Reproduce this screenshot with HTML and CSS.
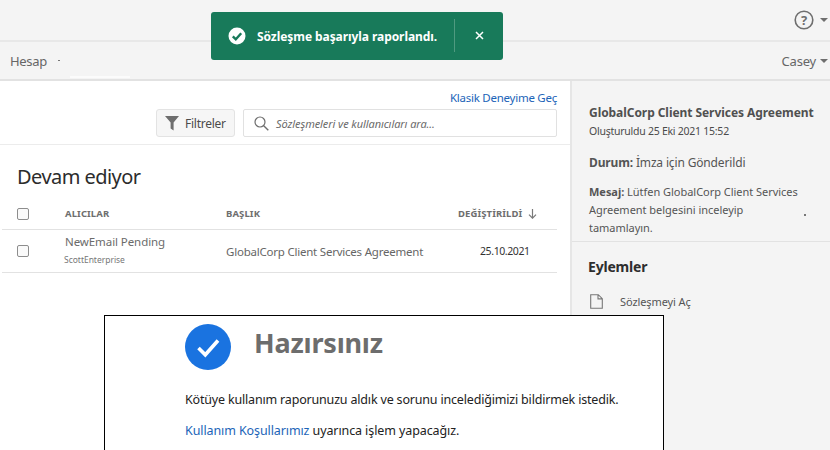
FILE: index.html
```html
<!DOCTYPE html>
<html lang="tr">
<head>
<meta charset="utf-8">
<title>Devam ediyor</title>
<link rel="stylesheet" href="styles.css">
</head>
<body>
<div class="page">
  <header class="topbar">
    <svg class="help" width="20" height="20" viewBox="0 0 20 20"><circle cx="10" cy="10" r="8.8" fill="none" stroke="#6e6e6e" stroke-width="1.6"/><text x="10" y="14.5" text-anchor="middle" class="help-q">?</text></svg>
    <span class="caret caret-help"></span>
  </header>
  <nav class="navbar">
    <span class="nav-item">Hesap</span>
    <span class="nav-active"></span>
    <span class="speck speck-nav"></span>
    <span class="user">Casey<span class="caret"></span></span>
  </nav>
  <div class="content">
    <main class="main">
      <div class="classic"><a href="#">Klasik Deneyime Geç</a></div>
      <div class="toolbar">
        <button class="filter">
          <svg width="14" height="15" viewBox="0 0 14 15"><path d="M0 0h14L8.6 6.6V14.5L5.6 12.5V6.6z" fill="#6e6e6e"/></svg>
          Filtreler
        </button>
        <div class="search">
          <svg width="15" height="15" viewBox="0 0 15 15"><circle cx="6" cy="6" r="5" fill="none" stroke="#6e6e6e" stroke-width="1.2"/><path d="M9.7 9.7l4.6 4.6" stroke="#6e6e6e" stroke-width="1.4"/></svg>
          <span>Sözleşmeleri ve kullanıcıları ara...</span>
        </div>
      </div>
      <h1 class="title">Devam ediyor</h1>
      <div class="row head">
        <span class="check"></span>
        <span class="col-a">ALICILAR</span>
        <span class="col-b">BAŞLIK</span>
        <span class="col-c">DEĞİŞTİRİLDİ
          <svg width="9" height="10" viewBox="0 0 9 10"><path d="M4.5 0v9M1 5.6l3.5 3.6L8 5.6" fill="none" stroke="#7a7a7a" stroke-width="1.2"/></svg>
        </span>
      </div>
      <div class="row body">
        <span class="check"></span>
        <span class="col-a"><span class="name">NewEmail Pending</span><span class="org">ScottEnterprise</span></span>
        <span class="col-b doc">GlobalCorp Client Services Agreement</span>
        <span class="col-c date">25.10.2021</span>
      </div>
    </main>
    <aside class="side">
      <section class="details">
        <h2 class="doc-title">GlobalCorp Client Services Agreement</h2>
        <p class="created">Oluşturuldu 25 Eki 2021 15:52</p>
        <p class="status"><b>Durum:</b> İmza için Gönderildi</p>
        <p class="message"><b>Mesaj:</b> Lütfen GlobalCorp Client Services Agreement belgesini inceleyip tamamlayın.</p>
        <span class="speck speck-side"></span>
      </section>
      <section class="actions">
        <h3 class="actions-title">Eylemler</h3>
        <div class="action">
          <svg width="13" height="15" viewBox="0 0 13 15"><path d="M.7.7h7.6l4 4v9.6H.7zM8 .7v4.2h4.3" fill="none" stroke="#777" stroke-width="1.1"/></svg>
          Sözleşmeyi Aç
        </div>
      </section>
    </aside>
  </div>
  <div class="toast">
    <svg width="18" height="18" viewBox="0 0 18 18"><circle cx="9" cy="9" r="8.5" fill="#fff"/><path d="M4.8 9.3l3 3 5.4-6" fill="none" stroke="#187a5a" stroke-width="2.4"/></svg>
    <span class="toast-text">Sözleşme başarıyla raporlandı.</span>
    <span class="toast-sep"></span>
    <svg class="toast-x" width="9" height="9" viewBox="0 0 9 9"><path d="M1 1l7 7M8 1L1 8" stroke="#fff" stroke-width="1.5"/></svg>
  </div>
  <div class="modal">
    <div class="modal-head">
      <svg width="46" height="46" viewBox="0 0 46 46"><circle cx="23" cy="23" r="23" fill="#1a73e0"/><path d="M13.5 24l6.8 6.8L33 16.5" fill="none" stroke="#fff" stroke-width="3.6"/></svg>
      <h2 class="modal-title">Hazırsınız</h2>
    </div>
    <p class="modal-p modal-lead">Kötüye kullanım raporunuzu aldık ve sorunu incelediğimizi bildirmek istedik.</p>
    <p class="modal-p"><a href="#">Kullanım Koşullarımız</a> uyarınca işlem yapacağız.</p>
  </div>
</div>
</body>
</html>
```
FILE: styles.css
```css
* { box-sizing: border-box; }
html, body { margin: 0; padding: 0; }
body { font-family: "Noto Sans", "Open Sans", sans-serif; color: #4b4b4b; background: #fff; }
.page { position: relative; width: 830px; height: 450px; overflow: hidden; }
a { color: #1c64b8; text-decoration: none; }

.topbar { height: 42px; background: #f4f4f4; border-bottom: 2px solid #e8e8e8; display: flex; align-items: center; justify-content: flex-end; padding: 0 2px 1px 0; gap: 6px; }
.help-q { font: 700 13px "Noto Sans", sans-serif; fill: #6e6e6e; }
.caret { display: inline-block; width: 0; height: 0; border-left: 4px solid transparent; border-right: 4px solid transparent; border-top: 4px solid #6e6e6e; }
.navbar { height: 39px; background: #f4f4f4; border-bottom: 2px solid #e2e2e2; display: flex; align-items: center; padding: 0 2px 0 10px; position: relative; font-size: 13px; color: #666; }
.nav-item { letter-spacing: -.3px; }
.nav-active { position: absolute; left: 70px; bottom: 1px; width: 60px; height: 2px; background: #fbfbfb; }
.user { margin-left: auto; display: flex; align-items: center; gap: 4px; letter-spacing: -.2px; }
.speck { position: absolute; background: #777; }
.speck-nav { left: 58px; top: 18px; width: 2px; height: 1px; }
.speck-side { left: 232px; top: 133px; width: 2px; height: 2px; }

.content { display: flex; height: 369px; }
.main { width: 570px; padding: 8px 13px 0 0; }
.classic { text-align: right; font-size: 11.5px; line-height: 18px; letter-spacing: -.25px; }
.toolbar { display: flex; justify-content: flex-end; gap: 8px; height: 35px; margin-top: 2px; }
.filter { display: flex; align-items: center; gap: 6px; width: 79px; height: 28px; padding: 0 0 0 8px; background: #f6f6f6; border: 1px solid #e3e3e3; border-radius: 3px; font: 12px "Noto Sans", sans-serif; color: #4b4b4b; letter-spacing: -.25px; }
.search { display: flex; align-items: center; gap: 7px; width: 314px; height: 28px; padding-left: 10px; border: 1px solid #e1e1e1; border-radius: 2px; font-size: 11px; font-style: italic; color: #6a6a6a; letter-spacing: -.08px; }
.title { margin: 0 -13px 0 0; border-top: 1px solid #ececec; padding: 18px 0 0 17px; font-size: 20px; line-height: 27px; font-weight: 400; color: #2c2c2c; letter-spacing: -.55px; }
.row { display: flex; align-items: center; margin-left: 2px; border-bottom: 1px solid #e2e2e2; padding-left: 15px; }
.head { height: 34px; margin-top: 6px; padding-top: 2px; font-size: 9.5px; font-weight: 700; color: #6e6e6e; letter-spacing: .1px; }
.body { height: 43px; }
.check { width: 12px; height: 12px; border: 1px solid #8d8d8d; border-radius: 2px; background: #fafafa; flex: none; }
.col-a { width: 161px; margin-left: 36px; }
.body .col-a { display: flex; flex-direction: column; margin-top: -3px; }
.col-b { width: 215px; }
.col-c { white-space: nowrap; display: flex; align-items: center; gap: 6px; margin-left: 17px; }
.name { font-size: 11.5px; line-height: 18px; color: #6b6b6b; letter-spacing: -.08px; }
.org { font-size: 8.5px; line-height: 13px; color: #777; letter-spacing: -.02px; margin: 2px 0 0 -1px; }
.doc { font-size: 11.5px; color: #666; letter-spacing: -.22px; }
.date { font-size: 10.5px; color: #333; margin-left: 39px; letter-spacing: -.4px; }

.side { width: 260px; background: #f4f4f4; border-left: 2px solid #e6e6e6; }
.details { position: relative; height: 161px; padding: 23px 10px 0 17px; border-bottom: 1px solid #e2e2e2; }
.doc-title { margin: 0; font-size: 12px; line-height: 18px; font-weight: 700; color: #505050; letter-spacing: -.06px; white-space: nowrap; }
.created { margin: 1px 0 0; font-size: 10.5px; line-height: 17px; color: #4b4b4b; letter-spacing: -.25px; }
.status { margin: 14px 0 0; font-size: 12px; line-height: 18px; color: #555; letter-spacing: -.15px; }
.message { margin: 11px 0 0; font-size: 11px; line-height: 18px; color: #555; letter-spacing: -.03px; width: 218px; }
.actions { padding: 15px 0 0 16px; }
.actions-title { margin: 0; font-size: 14px; line-height: 20px; font-weight: 700; color: #2e2e2e; letter-spacing: -.2px; }
.action { display: flex; align-items: center; gap: 17px; margin-top: 17px; padding-left: 2px; font-size: 11px; color: #555; letter-spacing: -.1px; }

.toast { position: absolute; left: 211px; top: 12px; width: 292px; height: 48px; background: #187a5a; border-radius: 3px; display: flex; align-items: center; padding-left: 17px; color: #fff; }
.toast-text { margin-left: 11px; font-size: 12px; font-weight: 700; letter-spacing: -.07px; white-space: nowrap; }
.toast-sep { position: absolute; left: 243px; top: 7px; width: 1px; height: 33px; background: #4f9a80; }
.toast-x { position: absolute; left: 264px; top: 19px; }

.modal { position: absolute; left: 104px; top: 315px; width: 560px; height: 140px; background: #fff; border: 1px solid #000; padding: 8px 0 0 80px; }
.modal-head { display: flex; align-items: flex-start; gap: 23px; height: 46px; }
.modal-title { margin: 0; font-size: 27px; line-height: 38px; font-weight: 700; color: #6d6d6d; letter-spacing: -.2px; }
.modal-p { margin: 0; font-size: 12.5px; line-height: 18px; color: #222; letter-spacing: -.1px; white-space: nowrap; }
.modal-lead { letter-spacing: -.18px; margin-top: 21px; }
.modal-p + .modal-p { margin-top: 13px; }
```
